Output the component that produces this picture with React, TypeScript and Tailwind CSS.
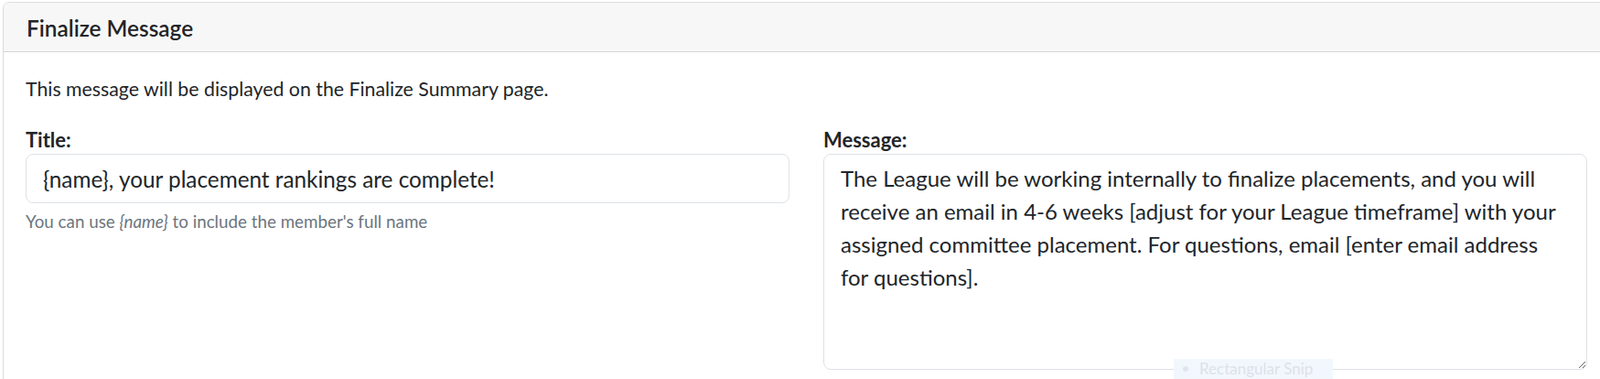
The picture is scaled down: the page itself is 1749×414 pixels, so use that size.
import React from "react";

const font = { fontFamily: '"Segoe UI", Lato, "Liberation Sans", sans-serif' };

export default function App() {
  return (
    <div className="relative h-[414px] w-full overflow-hidden bg-white text-[#212529]" style={font}>
      <div className="ml-[3px] mt-[2px] w-[1757px] rounded-[7px] border border-[#dcdcdc] bg-white">
        <div className="flex h-[54px] items-center rounded-t-[7px] border-b border-[#d6d6d6] bg-[#f7f7f7] px-[25px] pt-[3px]">
          <h5 className="text-[24.4px] font-semibold leading-none">Finalize Message</h5>
        </div>
        <div className="px-[24px] pt-[25px] pb-[40px]">
          <p className="mb-[28px] text-[21.3px] leading-[30px]">
            This message will be displayed on the Finalize Summary page.
          </p>
          <div className="grid grid-cols-2 gap-[37px]">
            <div>
              <label className="mb-[2px] block text-[22px] font-bold leading-[26px]">Title:</label>
              <input
                type="text"
                readOnly
                value="{name}, your placement rankings are complete!"
                className="block h-[54px] w-full rounded-[8px] border border-[#dee2e6] px-[18px] text-[24.3px] leading-[36px] text-[#212529] outline-none"
                style={font}
              />
              <div className="mt-[7px] text-[18.8px] leading-[26px] text-[#6c757d]">
                You can use <em>{"{name}"}</em> to include the member's full name
              </div>
            </div>
            <div>
              <label className="mb-[2px] block text-[22px] font-bold leading-[26px]">Message:</label>
              <textarea
                readOnly
                value="The League will be working internally to finalize placements, and you will receive an email in 4-6 weeks [adjust for your League timeframe] with your assigned committee placement. For questions, email [enter email address for questions]."
                className="block h-[236px] w-full resize-y rounded-[8px] border border-[#dee2e6] px-[18px] py-[8px] text-[24px] leading-[36px] text-[#212529] outline-none"
                style={font}
              />
            </div>
          </div>
        </div>
      </div>
      <div className="absolute left-[1283px] top-[392px] flex h-[22px] w-[174px] items-center gap-[12px] bg-[#f2f7fd] pl-[10px] text-[17px] text-[#dde2e8]">
        <span className="h-[6px] w-[6px] shrink-0 rounded-full bg-[#dfe6ef]" />
        <span className="whitespace-nowrap">Rectangular Snip</span>
      </div>
    </div>
  );
}
